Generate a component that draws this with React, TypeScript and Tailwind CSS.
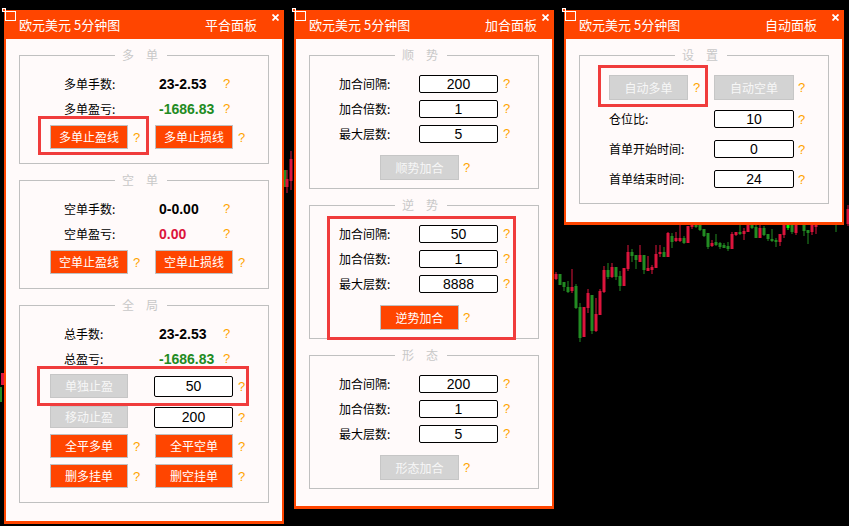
import React from 'react';

type Candle = [number, string, number, number, number, number];

// [x centre, colour, body top, body bottom, wick top, wick bottom]
const row: [number, string, number, number, number, number][] = [
  [0, 'r', 274, 279, 272, 280],
  [1, 'g', 274, 285, 274, 285],
  [2, 'g', 282, 287, 282, 291],
  [3, 'g', 287, 292, 281, 293],
  [4, 'r', 287, 291, 269, 293],
  [5, 'g', 286, 308, 284, 309],
  [6, 'g', 307, 338, 303, 342],
  [7, 'r', 307, 337, 307, 337],
  [8, 'r', 293, 308, 289, 313],
  [9, 'g', 295, 331, 295, 334],
  [10, 'r', 314, 331, 298, 332],
  [11, 'r', 291, 315, 289, 315],
  [12, 'r', 270, 292, 266, 293],
  [13, 'g', 270, 277, 263, 279],
  [14, 'r', 267, 277, 263, 278],
  [15, 'g', 267, 277, 267, 280],
  [16, 'g', 276, 286, 271, 291],
  [17, 'r', 268, 286, 268, 286],
  [18, 'r', 252, 269, 245, 271],
  [19, 'g', 252, 256, 249, 262],
  [20, 'g', 255, 260, 255, 269],
  [21, 'r', 255, 262, 245, 262],
  [22, 'g', 255, 270, 255, 274],
  [23, 'r', 268, 271, 256, 271],
  [24, 'r', 267, 270, 265, 274],
  [25, 'r', 254, 268, 245, 268],
  [26, 'r', 252, 254, 245, 257],
  [27, 'g', 252, 257, 247, 257],
  [28, 'r', 233, 257, 232, 257],
  [29, 'g', 236, 242, 233, 248],
  [30, 'r', 238, 241, 232, 242],
  [31, 'r', 238, 241, 225, 242],
  [32, 'g', 238, 243, 236, 244],
  [33, 'r', 226, 243, 226, 243],
  [34, 'r', 218, 227, 215, 229],
  [35, 'g', 220, 227, 218, 228],
  [36, 'g', 222, 230, 220, 231],
  [37, 'g', 229, 236, 229, 237],
  [38, 'g', 233, 247, 233, 249],
  [39, 'r', 243, 246, 240, 247],
  [40, 'g', 242, 245, 234, 246],
  [41, 'g', 243, 247, 242, 249],
  [42, 'g', 245, 248, 243, 248],
  [43, 'g', 246, 249, 242, 251],
  [44, 'r', 234, 249, 232, 249],
  [45, 'r', 232, 235, 232, 236],
  [46, 'g', 232, 234, 225, 235],
  [47, 'r', 231, 234, 228, 240],
  [48, 'r', 222, 232, 220, 232],
  [49, 'g', 222, 228, 220, 229],
  [50, 'g', 227, 238, 222, 238],
  [51, 'r', 228, 238, 224, 238],
  [52, 'g', 228, 235, 226, 236],
  [53, 'g', 234, 239, 234, 241],
  [54, 'g', 239, 241, 229, 242],
  [55, 'g', 240, 242, 238, 247],
  [56, 'r', 234, 242, 234, 246],
  [57, 'r', 222, 235, 220, 238],
  [58, 'l', 222, 228, 222, 230],
  [59, 'g', 222, 232, 220, 234],
  [60, 'r', 222, 233, 220, 235],
  [62, 'g', 220, 231, 218, 236],
  [63, 'g', 230, 233, 231, 244],
  [64, 'r', 224, 232, 222, 235],
  [65, 'r', 220, 227, 218, 234],
  [70, 'g', 215, 225, 212, 232],
  [73, 'r', 209, 224, 205, 226],
];

const candles: Candle[] = [
  ...row.map(([i, c, a, b, w1, w2]) => [556 + 4 * i, c, a, b, w1, w2] as Candle),
  [285, 'g', 170, 187, 170, 187],
  [287, 'r', 179, 187, 170, 193],
  [291, 'r', 159, 181, 151, 190],
  [2.5, 'r', 373, 385, 373, 385],
  [0.5, 'g', 387, 402, 387, 402],
];

const fill: Record<string, string> = { r: '#dc143c', g: '#228b22', l: '#00ff00' };

function Chart() {
  return (
    <svg className="absolute inset-0" width="849" height="526">
      {candles.map(([x, c, a, b, w1, w2], i) => (
        <g key={i} fill={fill[c]}>
          <rect x={x - 0.5} y={w1} width={1} height={w2 - w1} />
          <rect x={x - 1.5} y={a} width={3} height={b - a} />
        </g>
      ))}
    </svg>
  );
}

function Q({ className = '' }: { className?: string }) {
  return (
    <span className={`font-['Liberation_Sans',sans-serif] text-[13px] leading-none text-[#ffa500] ${className}`}>?</span>
  );
}

function Btn({ label, off, className = '' }: { label: string; off?: boolean; className?: string }) {
  return (
    <div
      className={`flex items-center justify-center border text-[12px] leading-none ${
        off ? 'border-[#c6c6c6] bg-[#d3d3d3] text-[#f7f7f7]' : 'border-[#c0c0c0] bg-[#ff4500] text-white'
      } ${className}`}
    >
      {label}
    </div>
  );
}

function Box({ value, className = '' }: { value: string; className?: string }) {
  return (
    <div
      className={`flex items-center justify-center rounded-[2px] border border-black bg-white font-['Liberation_Sans',sans-serif] text-[14px] leading-none text-black ${className}`}
    >
      {value}
    </div>
  );
}

function Group({ title, className = '', children }: { title: string; className?: string; children: React.ReactNode }) {
  return (
    <div className={`relative mx-[13px] mt-[16px] border border-[#c0c0c0] ${className}`}>
      <div className="absolute left-1/2 top-[-9px] ml-[-3px] flex -translate-x-1/2 gap-[12px] bg-[#fffafa] pl-[7px] pr-[9px] text-[12px] leading-[16px] text-[#c8c8c8]">
        <span>{title[0]}</span>
        <span>{title[1]}</span>
      </div>
      {children}
    </div>
  );
}

function Panel({
  title,
  className,
  titleClass,
  children,
}: {
  title: string;
  className: string;
  titleClass: string;
  children: React.ReactNode;
}) {
  return (
    <div className={`absolute flex flex-col bg-[#ff4500] ${className}`}>
      <div className="relative flex h-[29px] shrink-0 items-center pl-[15px] text-[13px] leading-none text-white">
        <span>欧元美元 5分钟图</span>
        <span className={`ml-auto ${titleClass}`}>{title}</span>
        <svg className="absolute right-[5px] top-[4px]" width="7" height="7" viewBox="0 0 7 7">
          <path d="M0.5 0.5 6.5 6.5 M6.5 0.5 0.5 6.5" stroke="white" strokeWidth="1.8" />
        </svg>
      </div>
      <div className="mx-[2px] mb-[3px] flex-1 bg-[#fffafa] text-black">{children}</div>
      <span className="absolute left-[1px] top-[1px] h-[10px] w-[11px] border border-white" />
      <span className="absolute left-[-2px] top-[-2px] h-[4px] w-[4px] border border-white bg-[#ff4500]" />
    </div>
  );
}

function Info({ label, value, color }: { label: string; value: string; color: string }) {
  return (
    <div className="flex h-[25px] items-center pl-[44px]">
      <span className="w-[95px] text-[12px] leading-none">{label}</span>
      <span className={`w-[64px] font-['Liberation_Sans',sans-serif] text-[14px] font-bold leading-none ${color}`}>{value}</span>
      <Q />
    </div>
  );
}

function BtnPair({ a, b, className = '' }: { a: string; b: string; className?: string }) {
  return (
    <div className={`flex pl-[30px] ${className}`}>
      <Btn label={a} className="w-[78px]" />
      <span className="flex w-[27px] items-center pl-[5px]">
        <Q />
      </span>
      <Btn label={b} className="w-[78px]" />
      <span className="flex items-center pl-[5px]">
        <Q />
      </span>
    </div>
  );
}

function Field({ label, value }: { label: string; value: string }) {
  return (
    <div className="flex h-[25px] items-center pl-[29px]">
      <span className="w-[80px] text-[12px] leading-none">{label}</span>
      <Box value={value} className="h-[18px] w-[79px]" />
      <Q className="ml-[5px]" />
    </div>
  );
}

function AddGroup({ title, fields, button, off }: { title: string; fields: string[]; button: string; off?: boolean }) {
  return (
    <Group title={title} className="pb-[8px] pt-[15px]">
      <Field label="加合间隔:" value={fields[0]} />
      <Field label="加合倍数:" value={fields[1]} />
      <Field label="最大层数:" value={fields[2]} />
      <div className="mt-[9px] flex h-[25px] pl-[70px]">
        <Btn label={button} off={off} className="w-[79px]" />
        <span className="flex items-center pl-[4px]">
          <Q />
        </span>
      </div>
    </Group>
  );
}

function AutoRow({ label, value }: { label: string; value: string }) {
  return (
    <div className="flex h-[30px] items-center pl-[29px]">
      <span className="w-[105px] text-[12px] leading-none">{label}</span>
      <Box value={value} className="h-[18px] w-[80px]" />
      <Q className="ml-[4px]" />
    </div>
  );
}

export default function App() {
  return (
    <div className="relative h-[526px] w-[849px] overflow-hidden bg-black font-['Noto_Sans_CJK_SC',sans-serif]">
      <Chart />

      <Panel title="平合面板" titleClass="pr-[27px]" className="left-[4px] top-[10px] h-[514px] w-[280px]">
        <Group title="多单" className="pb-[14px] pt-[15px]">
          <Info label="多单手数:" value="23-2.53" color="text-black" />
          <Info label="多单盈亏:" value="-1686.83" color="text-[#228b22]" />
          <BtnPair a="多单止盈线" b="多单止损线" className="mt-[4px] h-[24px]" />
        </Group>
        <Group title="空单" className="pb-[14px] pt-[15px]">
          <Info label="空单手数:" value="0-0.00" color="text-black" />
          <Info label="空单盈亏:" value="0.00" color="text-[#dc143c]" />
          <BtnPair a="空单止盈线" b="空单止损线" className="mt-[4px] h-[24px]" />
        </Group>
        <Group title="全局" className="pb-[14px] pt-[15px]">
          <Info label="总手数:" value="23-2.53" color="text-black" />
          <Info label="总盈亏:" value="-1686.83" color="text-[#228b22]" />
          <div className="mt-[3px] flex h-[24px] items-center pl-[30px]">
            <Btn label="单独止盈" off className="h-full w-[78px]" />
            <span className="w-[26px]" />
            <Box value="50" className="h-[21px] w-[79px]" />
            <Q className="ml-[5px]" />
          </div>
          <div className="mt-[8px] flex h-[22px] items-center pl-[30px]">
            <Btn label="移动止盈" off className="h-full w-[78px]" />
            <span className="w-[26px]" />
            <Box value="200" className="h-[21px] w-[79px]" />
            <Q className="ml-[5px]" />
          </div>
          <BtnPair a="全平多单" b="全平空单" className="mt-[6px] h-[24px]" />
          <BtnPair a="删多挂单" b="删空挂单" className="mt-[6px] h-[24px]" />
        </Group>
      </Panel>

      <Panel title="加合面板" titleClass="pr-[17px]" className="left-[294px] top-[10px] h-[499px] w-[260px]">
        <AddGroup title="顺势" fields={['200', '1', '5']} button="顺势加合" off />
        <AddGroup title="逆势" fields={['50', '1', '8888']} button="逆势加合" />
        <AddGroup title="形态" fields={['200', '1', '5']} button="形态加合" off />
      </Panel>

      <Panel title="自动面板" titleClass="pr-[27px]" className="left-[564px] top-[10px] h-[215px] w-[280px]">
        <Group title="设置" className="pb-[9px] pt-[19px]">
          <div className="flex h-[25px] pl-[29px]">
            <Btn label="自动多单" off className="w-[79px]" />
            <span className="flex w-[26px] items-center pl-[5px]">
              <Q />
            </span>
            <Btn label="自动空单" off className="w-[80px]" />
            <span className="flex items-center pl-[4px]">
              <Q />
            </span>
          </div>
          <div className="mt-[4px]">
            <AutoRow label="仓位比:" value="10" />
            <AutoRow label="首单开始时间:" value="0" />
            <AutoRow label="首单结束时间:" value="24" />
          </div>
        </Group>
      </Panel>

      {/* annotation frames */}
      <div className="absolute left-[38px] top-[116px] h-[39px] w-[111px] border-[3px] border-[#f03c3c]" />
      <div className="absolute left-[37px] top-[366px] h-[40px] w-[212px] border-[3px] border-[#f03c3c]" />
      <div className="absolute left-[327px] top-[216px] h-[124px] w-[189px] border-[3px] border-[#f03c3c]" />
      <div className="absolute left-[598px] top-[65px] h-[42px] w-[110px] border-[3px] border-[#f03c3c]" />
    </div>
  );
}
